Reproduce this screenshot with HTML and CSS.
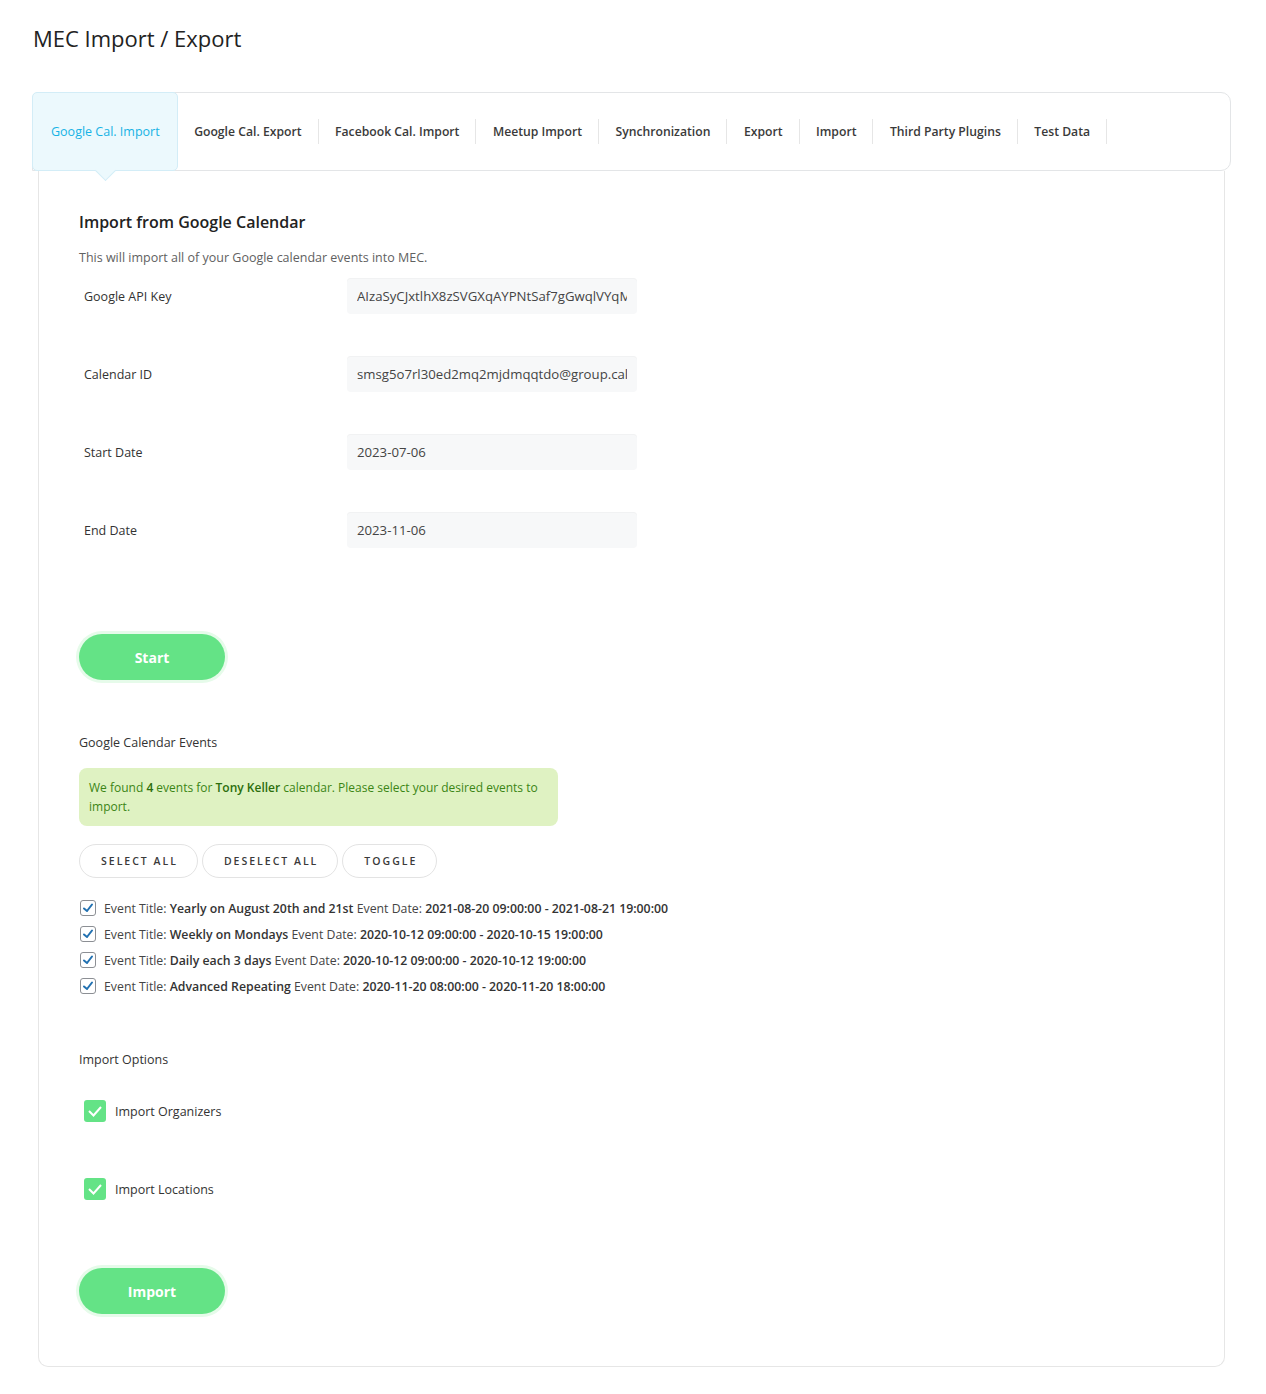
FILE: index.html
```html
<!DOCTYPE html>
<html lang="en">

<head>
    <meta charset="UTF-8">
    <meta name="viewport" content="width=device-width, initial-scale=1.0">
    <title>MEC Import / Export</title>
    <link rel="stylesheet" href="styles.css">
</head>

<body>
    <div class="wrap">
        <h1 class="page-title">MEC Import / Export</h1>

        <div class="tabs">
            <a class="tab active">Google Cal. Import</a>
            <a class="tab">Google Cal. Export</a>
            <a class="tab">Facebook Cal. Import</a>
            <a class="tab">Meetup Import</a>
            <a class="tab">Synchronization</a>
            <a class="tab">Export</a>
            <a class="tab">Import</a>
            <a class="tab">Third Party Plugins</a>
            <a class="tab">Test Data</a>
        </div>

        <div class="panel">
            <h3 class="panel-title">Import from Google Calendar</h3>
            <p class="desc">This will import all of your Google calendar events into MEC.</p>

            <div class="form-row">
                <label for="api-key">Google API Key</label>
                <input type="text" id="api-key" value="AIzaSyCJxtlhX8zSVGXqAYPNtSaf7gGwqlVYqMk0">
            </div>
            <div class="form-row">
                <label for="calendar-id">Calendar ID</label>
                <input type="text" id="calendar-id" value="smsg5o7rl30ed2mq2mjdmqqtdo@group.calendar.google.com">
            </div>
            <div class="form-row">
                <label for="start-date">Start Date</label>
                <input type="text" id="start-date" value="2023-07-06">
            </div>
            <div class="form-row">
                <label for="end-date">End Date</label>
                <input type="text" id="end-date" value="2023-11-06">
            </div>

            <button type="button" class="btn-green start-btn">Start</button>

            <h4 class="sub-title">Google Calendar Events</h4>
            <div class="notice">We found <strong>4</strong> events for <strong>Tony Keller</strong> calendar. Please select your desired events to import.</div>

            <div class="select-buttons">
                <button type="button">SELECT ALL</button>
                <button type="button">DESELECT ALL</button>
                <button type="button">TOGGLE</button>
            </div>

            <ul class="event-list">
                <li>
                    <span class="check-box"><svg width="12" height="12" viewBox="0 0 12 12"><polyline points="2,6.5 5,9 10,2.5" fill="none" stroke="#2271b1" stroke-width="2" stroke-linecap="round" stroke-linejoin="round"/></svg></span>
                    <span>Event Title: <b>Yearly on August 20th and 21st</b> Event Date: <b>2021-08-20 09:00:00 - 2021-08-21 19:00:00</b></span>
                </li>
                <li>
                    <span class="check-box"><svg width="12" height="12" viewBox="0 0 12 12"><polyline points="2,6.5 5,9 10,2.5" fill="none" stroke="#2271b1" stroke-width="2" stroke-linecap="round" stroke-linejoin="round"/></svg></span>
                    <span>Event Title: <b>Weekly on Mondays</b> Event Date: <b>2020-10-12 09:00:00 - 2020-10-15 19:00:00</b></span>
                </li>
                <li>
                    <span class="check-box"><svg width="12" height="12" viewBox="0 0 12 12"><polyline points="2,6.5 5,9 10,2.5" fill="none" stroke="#2271b1" stroke-width="2" stroke-linecap="round" stroke-linejoin="round"/></svg></span>
                    <span>Event Title: <b>Daily each 3 days</b> Event Date: <b>2020-10-12 09:00:00 - 2020-10-12 19:00:00</b></span>
                </li>
                <li>
                    <span class="check-box"><svg width="12" height="12" viewBox="0 0 12 12"><polyline points="2,6.5 5,9 10,2.5" fill="none" stroke="#2271b1" stroke-width="2" stroke-linecap="round" stroke-linejoin="round"/></svg></span>
                    <span>Event Title: <b>Advanced Repeating</b> Event Date: <b>2020-11-20 08:00:00 - 2020-11-20 18:00:00</b></span>
                </li>
            </ul>

            <h4 class="sub-title options-title">Import Options</h4>
            <div class="option-row">
                <span class="green-check"><svg width="22" height="22" viewBox="0 0 22 22"><polyline points="5,11 9.5,15.5 17,7" fill="none" stroke="#fff" stroke-width="2"/></svg></span>
                <span>Import Organizers</span>
            </div>
            <div class="option-row">
                <span class="green-check"><svg width="22" height="22" viewBox="0 0 22 22"><polyline points="5,11 9.5,15.5 17,7" fill="none" stroke="#fff" stroke-width="2"/></svg></span>
                <span>Import Locations</span>
            </div>

            <button type="button" class="btn-green import-btn">Import</button>
        </div>
    </div>
</body>

</html>
```

FILE: styles.css
```css
/* Base page */
body {
    margin: 0;
    background: #fff;
    font-family: "Open Sans", "Noto Sans", sans-serif;
    color: #333;
}

.wrap {
    padding: 0 35px 28px 32px;
}

/* Page title */
.page-title {
    margin: 0;
    padding: 23px 0 0 1px;
    line-height: 30px;
    font-size: 22px;
    font-weight: 400;
    color: #222;
}

/* Tab bar */
.tabs {
    margin-top: 39px;
    display: flex;
    align-items: center;
    height: 77px;
    border: 1px solid #e3e5e7;
    border-radius: 10px 10px 10px 0;
}

.tab {
    font-size: 12.2px;
    font-weight: 600;
    color: #3a3a3a;
    padding: 1px 16px 0 16.5px;
    line-height: 24px;
    border-right: 1px solid #e6e6e6;
    white-space: nowrap;
}

.tab.active {
    position: relative;
    align-self: stretch;
    margin: -1px 0 -1px -1px;
    padding: 1px 17px 0 18px;
    display: flex;
    align-items: center;
    border: 1px solid #d3edf7;
    border-radius: 5px;
    background: #ecf9fd;
    color: #17b3e5;
    font-size: 12.5px;
    font-weight: 500;
}

/* Arrow under the active tab */
.tab.active::after {
    content: "";
    position: absolute;
    left: 65px;
    bottom: -8px;
    width: 14px;
    height: 14px;
    background: #ecf9fd;
    border-right: 1px solid #d3edf7;
    border-bottom: 1px solid #d3edf7;
    transform: rotate(45deg);
}

/* Content panel */
.panel {
    margin: 0 6px;
    border: 1px solid #e6e6e6;
    border-top: none;
    border-radius: 0 0 10px 10px;
    padding: 39px 40px 52px 40px;
}

.panel-title {
    margin: 0;
    font-size: 16px;
    line-height: 24px;
    font-weight: 600;
    color: #222;
}

.desc {
    margin: 14px 0 10px;
    font-size: 12.5px;
    line-height: 20px;
    color: #616161;
}

/* Form rows */
.form-row {
    display: flex;
    align-items: center;
    height: 36px;
    margin-bottom: 42px;
}

.form-row label {
    width: 263px;
    padding-left: 5px;
    font-size: 12.5px;
    font-weight: 500;
    color: #333;
}

.form-row input {
    width: 290px;
    height: 36px;
    box-sizing: border-box;
    padding: 0 10px;
    border: none;
    border-radius: 4px;
    background: #f7f8f9;
    box-shadow: 0 1px 0 #f1f2f3 inset;
    font-family: "Open Sans", "Noto Sans", sans-serif;
    font-size: 13.2px;
    color: #444;
    outline: none;
}

/* Green round buttons */
.btn-green {
    display: block;
    width: 146px;
    height: 46px;
    border: none;
    border-radius: 23px;
    background: #64e386;
    box-shadow: 0 0 0 3px #e6fbea;
    color: #fff;
    font-family: "Open Sans", "Noto Sans", sans-serif;
    font-size: 14px;
    font-weight: 700;
    cursor: pointer;
}

.start-btn {
    margin-top: 86px;
}

/* Section titles */
.sub-title {
    margin: 53px 0 0;
    font-size: 12.5px;
    line-height: 20px;
    font-weight: 500;
    color: #333;
}

/* Found events notice */
.notice {
    margin-top: 15px;
    width: 479px;
    box-sizing: border-box;
    padding: 10px 10px 10px;
    border-radius: 8px;
    background: #dff2c2;
    color: #3b8515;
    font-size: 12px;
    line-height: 19px;
}

.notice strong {
    color: #2c6e0c;
    font-weight: 600;
}

/* Select / deselect / toggle */
.select-buttons {
    display: flex;
    gap: 4px;
    margin-top: 18px;
}

.select-buttons button {
    height: 34px;
    padding: 0 19px 0 21px;
    border: 1px solid #e3e3e3;
    border-radius: 17px;
    background: #fff;
    font-family: "Open Sans", "Noto Sans", sans-serif;
    font-size: 10.5px;
    font-weight: 600;
    letter-spacing: 2px;
    color: #3a3a3a;
    cursor: pointer;
}

/* Event list */
.event-list {
    list-style: none;
    margin: 17px 0 0;
    padding: 0;
}

.event-list li {
    display: flex;
    align-items: center;
    height: 26px;
    font-size: 12.3px;
    color: #444;
}

.event-list b {
    font-weight: 600;
    color: #333;
}

.check-box {
    width: 14px;
    height: 14px;
    margin: 0 8px 0 1px;
    border: 1px solid #8c8f94;
    border-radius: 3px;
    display: flex;
    align-items: center;
    justify-content: center;
}

/* Import options */
.options-title {
    margin-top: 51px;
}

.option-row {
    display: flex;
    align-items: center;
    height: 22px;
    margin: 30px 0 0 5px;
    font-size: 12.5px;
    font-weight: 500;
    color: #333;
}

.option-row + .option-row {
    margin-top: 56px;
}

.green-check {
    width: 22px;
    height: 22px;
    margin-right: 9px;
    border-radius: 3px;
    background: #64e386;
    display: flex;
}

.import-btn {
    margin-top: 68px;
}
```
